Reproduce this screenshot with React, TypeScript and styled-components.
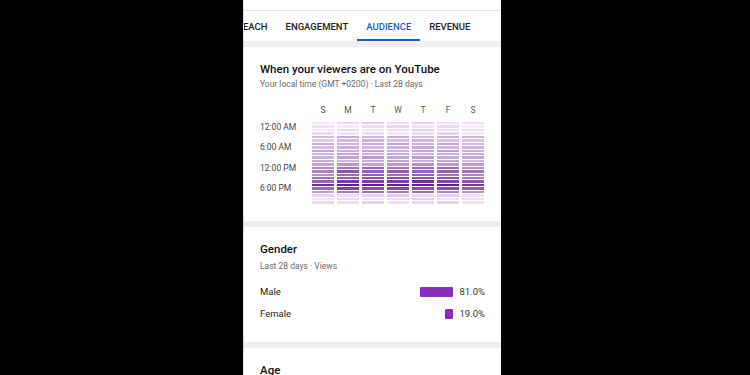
import React from 'react';
import styled, { createGlobalStyle } from 'styled-components';

const GlobalStyle = createGlobalStyle`
  html, body {
    margin: 0;
    padding: 0;
    background: #000;
  }
  body {
    font-family: Roboto, "Liberation Sans", Arial, sans-serif;
    -webkit-font-smoothing: antialiased;
  }
`;

const Screen = styled.div`
  width: 750px;
  height: 375px;
  background: #000;
  overflow: hidden;
  display: flex;
`;

const Phone = styled.div`
  margin-left: 243px;
  width: 258px;
  height: 375px;
  background: #efefef;
  border-left: 1px solid #d8d8d8;
  box-sizing: border-box;
  display: flex;
  flex-direction: column;
  gap: 6px;
  overflow: hidden;
`;

const TopArea = styled.div`
  background: #fff;
  display: flex;
  flex-direction: column;
`;

const HeaderStrip = styled.div`
  height: 10px;
  border-bottom: 1px solid #e3e3e3;
`;

const TabStrip = styled.div`
  height: 30px;
  overflow: hidden;
`;

const TabRow = styled.div`
  display: flex;
  height: 100%;
  margin-left: -16px;
`;

const Tab = styled.div<{ $active?: boolean }>`
  display: flex;
  align-items: center;
  padding: 2px 9px 0;
  font-size: 9.5px;
  font-weight: 500;
  white-space: nowrap;
  color: ${({ $active }) => ($active ? '#1c5fc4' : '#222')};
  border-bottom: 2px solid ${({ $active }) => ($active ? '#1c5fc4' : 'transparent')};
`;

const Card = styled.section<{ $bottom?: number }>`
  background: #fff;
  padding: 14px 16px ${({ $bottom }) => $bottom ?? 16}px 16px;
  display: flex;
  flex-direction: column;
`;

const CardTitle = styled.h2`
  margin: 0;
  font-size: 11.5px;
  line-height: 16px;
  font-weight: 500;
  color: #111;
`;

const CardSub = styled.div<{ $gap?: number }>`
  margin-top: ${({ $gap }) => $gap ?? 1}px;
  font-size: 8.5px;
  line-height: 12px;
  color: #6a6a6a;
`;

const HeatWrap = styled.div`
  margin-top: 14px;
  display: grid;
  grid-template-columns: 52px 1fr;
  grid-template-rows: 12px auto;
  row-gap: 6px;
`;

const DayRow = styled.div`
  grid-column: 2;
  display: grid;
  grid-template-columns: repeat(7, 22px);
  column-gap: 3px;
`;

const DayLabel = styled.span`
  text-align: center;
  font-size: 8.5px;
  line-height: 12px;
  color: #555;
`;

const TimeCol = styled.div`
  display: grid;
  grid-template-rows: repeat(4, 1fr);
`;

const TimeLabel = styled.span`
  font-size: 8.5px;
  line-height: 11px;
  color: #444;
`;

const Grid = styled.div`
  display: grid;
  grid-template-columns: repeat(7, 22px);
  column-gap: 3px;
`;

const DayColumn = styled.div`
  display: flex;
  flex-direction: column;
  gap: 1px;
`;

const Cell = styled.div`
  height: 2.45px;
`;

const Rows = styled.div`
  margin-top: 13px;
  display: flex;
  flex-direction: column;
  gap: 8px;
`;

const BarRow = styled.div`
  display: flex;
  align-items: center;
  height: 14px;
  gap: 6px;
`;

const BarLabel = styled.span`
  flex: 1;
  font-size: 9.5px;
  color: #222;
`;

const Bar = styled.div`
  height: 10px;
  background: #8a2cc0;
  border-radius: 1px;
`;

const Pct = styled.span`
  width: 26px;
  text-align: right;
  font-size: 9.5px;
  color: #333;
`;

const days = ['S', 'M', 'T', 'W', 'T', 'F', 'S'];

const hourBase = [
  0.08, 0.05, 0.07, 0.05, 0.26, 0.22, 0.3, 0.26, 0.32, 0.28, 0.34, 0.3,
  0.38, 0.52, 0.6, 0.55, 0.64, 0.76, 0.95, 0.7, 0.48, 0.1, 0.06, 0.08,
];

const dayBoost = [-0.08, 0.07, 0.09, 0.08, 0.09, 0.06, -0.06];

const light = [246, 236, 250];
const dark = [102, 24, 152];

function shade(t: number) {
  const v = Math.max(0, Math.min(1, t));
  const c = light.map((l, i) => Math.round(l + (dark[i] - l) * v));
  return `rgb(${c[0]}, ${c[1]}, ${c[2]})`;
}

function intensity(day: number, hour: number) {
  const jitter = (((day * 7 + hour * 13) % 5) - 2) * 0.02;
  const boost = hour >= 13 && hour <= 20 ? dayBoost[day] : dayBoost[day] * 0.2;
  return hourBase[hour] + boost + jitter;
}

const genders = [
  { label: 'Male', pct: 81.0 },
  { label: 'Female', pct: 19.0 },
];

export default function App() {
  return (
    <Screen>
      <GlobalStyle />
      <Phone>
        <TopArea>
          <HeaderStrip />
          <TabStrip>
            <TabRow>
              <Tab>REACH</Tab>
              <Tab>ENGAGEMENT</Tab>
              <Tab $active>AUDIENCE</Tab>
              <Tab>REVENUE</Tab>
            </TabRow>
          </TabStrip>
        </TopArea>

        <Card $bottom={17}>
          <CardTitle>When your viewers are on YouTube</CardTitle>
          <CardSub>Your local time (GMT +0200) · Last 28 days</CardSub>
          <HeatWrap>
            <DayRow>
              {days.map((d, i) => (
                <DayLabel key={i}>{d}</DayLabel>
              ))}
            </DayRow>
            <TimeCol>
              <TimeLabel>12:00 AM</TimeLabel>
              <TimeLabel>6:00 AM</TimeLabel>
              <TimeLabel>12:00 PM</TimeLabel>
              <TimeLabel>6:00 PM</TimeLabel>
            </TimeCol>
            <Grid>
              {days.map((_, d) => (
                <DayColumn key={d}>
                  {hourBase.map((__, h) => (
                    <Cell key={h} style={{ background: shade(intensity(d, h)) }} />
                  ))}
                </DayColumn>
              ))}
            </Grid>
          </HeatWrap>
        </Card>

        <Card $bottom={21}>
          <CardTitle>Gender</CardTitle>
          <CardSub $gap={3}>Last 28 days · Views</CardSub>
          <Rows>
            {genders.map((g) => (
              <BarRow key={g.label}>
                <BarLabel>{g.label}</BarLabel>
                <Bar style={{ width: g.pct * 0.41 }} />
                <Pct>{g.pct.toFixed(1)}%</Pct>
              </BarRow>
            ))}
          </Rows>
        </Card>

        <Card>
          <CardTitle>Age</CardTitle>
        </Card>
      </Phone>
    </Screen>
  );
}
